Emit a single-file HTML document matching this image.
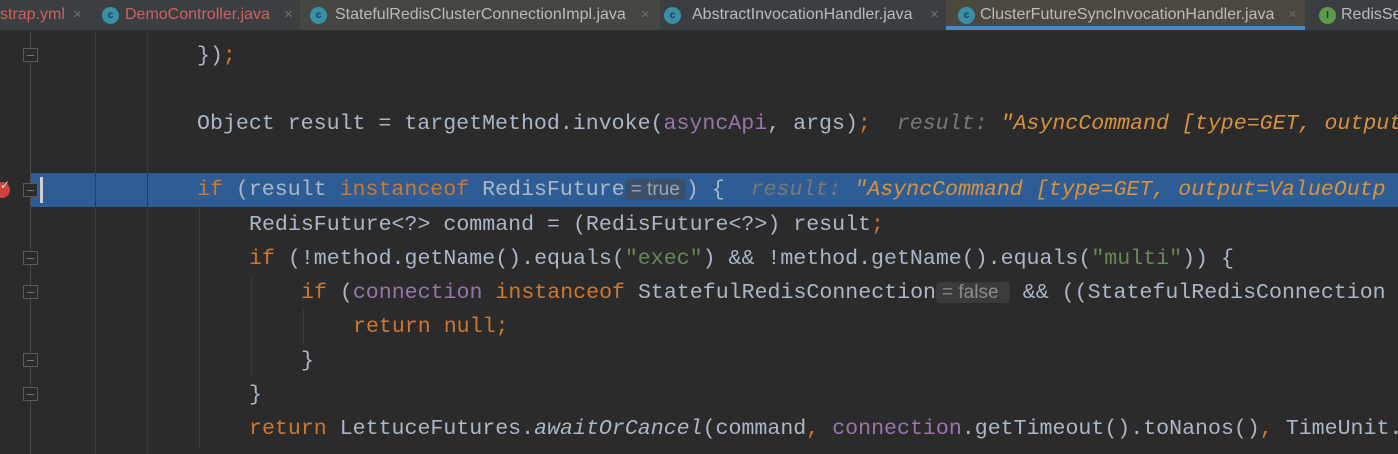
<!DOCTYPE html>
<html><head><meta charset="utf-8"><style>
*{margin:0;padding:0;box-sizing:border-box}
html,body{width:1398px;height:454px;overflow:hidden}
body{background:#2b2b2b;position:relative;font-family:"Liberation Mono",monospace}
.tabs{position:absolute;left:0;top:0;width:1398px;height:31px;background:#3c3f41;border-bottom:1px solid #323232;font-family:"Liberation Sans",sans-serif;font-size:16px;overflow:hidden}
.tab{position:absolute;top:0;height:30px;line-height:30px;color:#bbbbbb;white-space:nowrap;overflow:hidden}
.ic{position:absolute;top:7px;width:17px;height:17px;border-radius:50%;background:#3a8fa8;color:#1e3a44;font-size:10px;line-height:17px;text-align:center;font-weight:bold}
.x{position:absolute;top:0;color:#6e6e6e;font-size:15px}
.code{position:absolute;left:0;top:39px;width:1398px;height:415px;overflow:hidden}
.ln{position:absolute;left:0;height:34px;line-height:34px;white-space:pre;font-size:21.6px;color:#a9b7c6}
.k{color:#cc7832}.s{color:#6a8759}.f{color:#9876aa}.i{font-style:italic}
.c{color:#787878;font-style:italic}.v{color:#d8923c;font-style:italic}
.inl{background:#3b3b3b;color:#8a8a8a;font-family:"Liberation Sans",sans-serif;font-size:19px;border-radius:4px;padding:0 6px}
.sel{position:absolute;left:30px;top:173px;width:1368px;height:34px;background:#2e5d96}
.vl{position:absolute;width:1px;background:#3a3a3a}
.fold{position:absolute;left:23px;width:15px;height:14px;border:1px solid #5a5a5a;background:#2b2b2b}
.fold:after{content:"";position:absolute;left:3px;top:6px;width:7px;height:1px;background:#777}
</style></head><body>
<div class="tabs">
 <div class="tab" style="left:0;width:100px"><span style="color:#d06060;position:absolute;left:0">strap.yml</span><span class="x" style="left:73px">×</span></div>
 <div class="tab" style="left:100px;width:200px"><span class="ic" style="left:2px">c</span><span style="color:#d06060;position:absolute;left:25px">DemoController.java</span><span class="x" style="left:184px">×</span></div>
 <div class="tab" style="left:300px;width:360px;background:#454541"><span class="ic" style="left:10px">c</span><span style="position:absolute;left:35px">StatefulRedisClusterConnectionImpl.java</span><span class="x" style="left:341px">×</span></div>
 <div class="tab" style="left:660px;width:286px"><span class="ic" style="left:4px">c</span><span style="position:absolute;left:32px">AbstractInvocationHandler.java</span><span class="x" style="left:270px">×</span></div>
 <div class="tab" style="left:946px;width:359px;background:#4b483f;border-bottom:4px solid #4a88c7"><span class="ic" style="left:12px">c</span><span style="position:absolute;left:34px">ClusterFutureSyncInvocationHandler.java</span><span class="x" style="left:342px">×</span></div>
 <div class="tab" style="left:1305px;width:93px"><span class="ic" style="left:14px;background:#5e9a48">I</span><span style="position:absolute;left:36px">RedisSe</span></div>
</div>
<div class="sel"></div>
<div class="vl" style="left:30px;top:31px;height:423px;background:#4a4a4a"></div>
<div class="vl" style="left:95px;top:31px;height:423px"></div>
<div class="vl" style="left:147px;top:31px;height:423px"></div>
<div class="vl" style="left:199px;top:207px;height:240px"></div>
<div class="vl" style="left:251px;top:275px;height:103px"></div>
<div class="vl" style="left:303px;top:309px;height:34px"></div>
<div style="position:absolute;left:40px;top:177px;width:3px;height:26px;background:#cfcfcf"></div>
<div style="position:absolute;left:-6px;top:182px;width:16px;height:16px;border-radius:50%;background:#d04040"></div>
<div style="position:absolute;left:0px;top:178px;color:#ddd;font-size:12px;font-family:'DejaVu Sans'">✓</div>
<div class="fold" style="top:48px"></div>
<div class="fold" style="top:183px"></div>
<div class="fold" style="top:251px"></div>
<div class="fold" style="top:285px"></div>
<div class="fold" style="top:353px"></div>
<div class="fold" style="top:387px"></div>
<div class="code">
<div class="ln" style="top:0;left:197px">})<span class="k">;</span></div>
<div class="ln" style="top:68px;left:197px">Object result = targetMethod.invoke(<span class="f">asyncApi</span>, args)<span class="k">;</span>  <span class="c">result:</span> <span class="v">"AsyncCommand [type=GET, output</span></div>
<div class="ln" style="top:134px;left:197px"><span class="k">if</span> (result <span class="k">instanceof</span> RedisFuture<span class="inl" style="background:#3b4f68;color:#9aa5b0">= true</span>) {  <span class="c">result:</span> <span class="v">"AsyncCommand [type=GET, output=ValueOutp</span></div>
<div class="ln" style="top:169px;left:249px">RedisFuture&lt;?&gt; command = (RedisFuture&lt;?&gt;) result<span class="k">;</span></div>
<div class="ln" style="top:203px;left:249px"><span class="k">if</span> (!method.getName().equals(<span class="s">"exec"</span>) &amp;&amp; !method.getName().equals(<span class="s">"multi"</span>)) {</div>
<div class="ln" style="top:237px;left:301px"><span class="k">if</span> (<span class="f">connection</span> <span class="k">instanceof</span> StatefulRedisConnection<span class="inl">= false </span> &amp;&amp; ((StatefulRedisConnection</div>
<div class="ln" style="top:271px;left:353px"><span class="k">return null;</span></div>
<div class="ln" style="top:305px;left:301px">}</div>
<div class="ln" style="top:339px;left:249px">}</div>
<div class="ln" style="top:373px;left:249px"><span class="k">return</span> LettuceFutures.<span class="i">awaitOrCancel</span>(command<span class="k">,</span> <span class="f">connection</span>.getTimeout().toNanos()<span class="k">,</span> TimeUnit.</div>
</div>
</body></html>
